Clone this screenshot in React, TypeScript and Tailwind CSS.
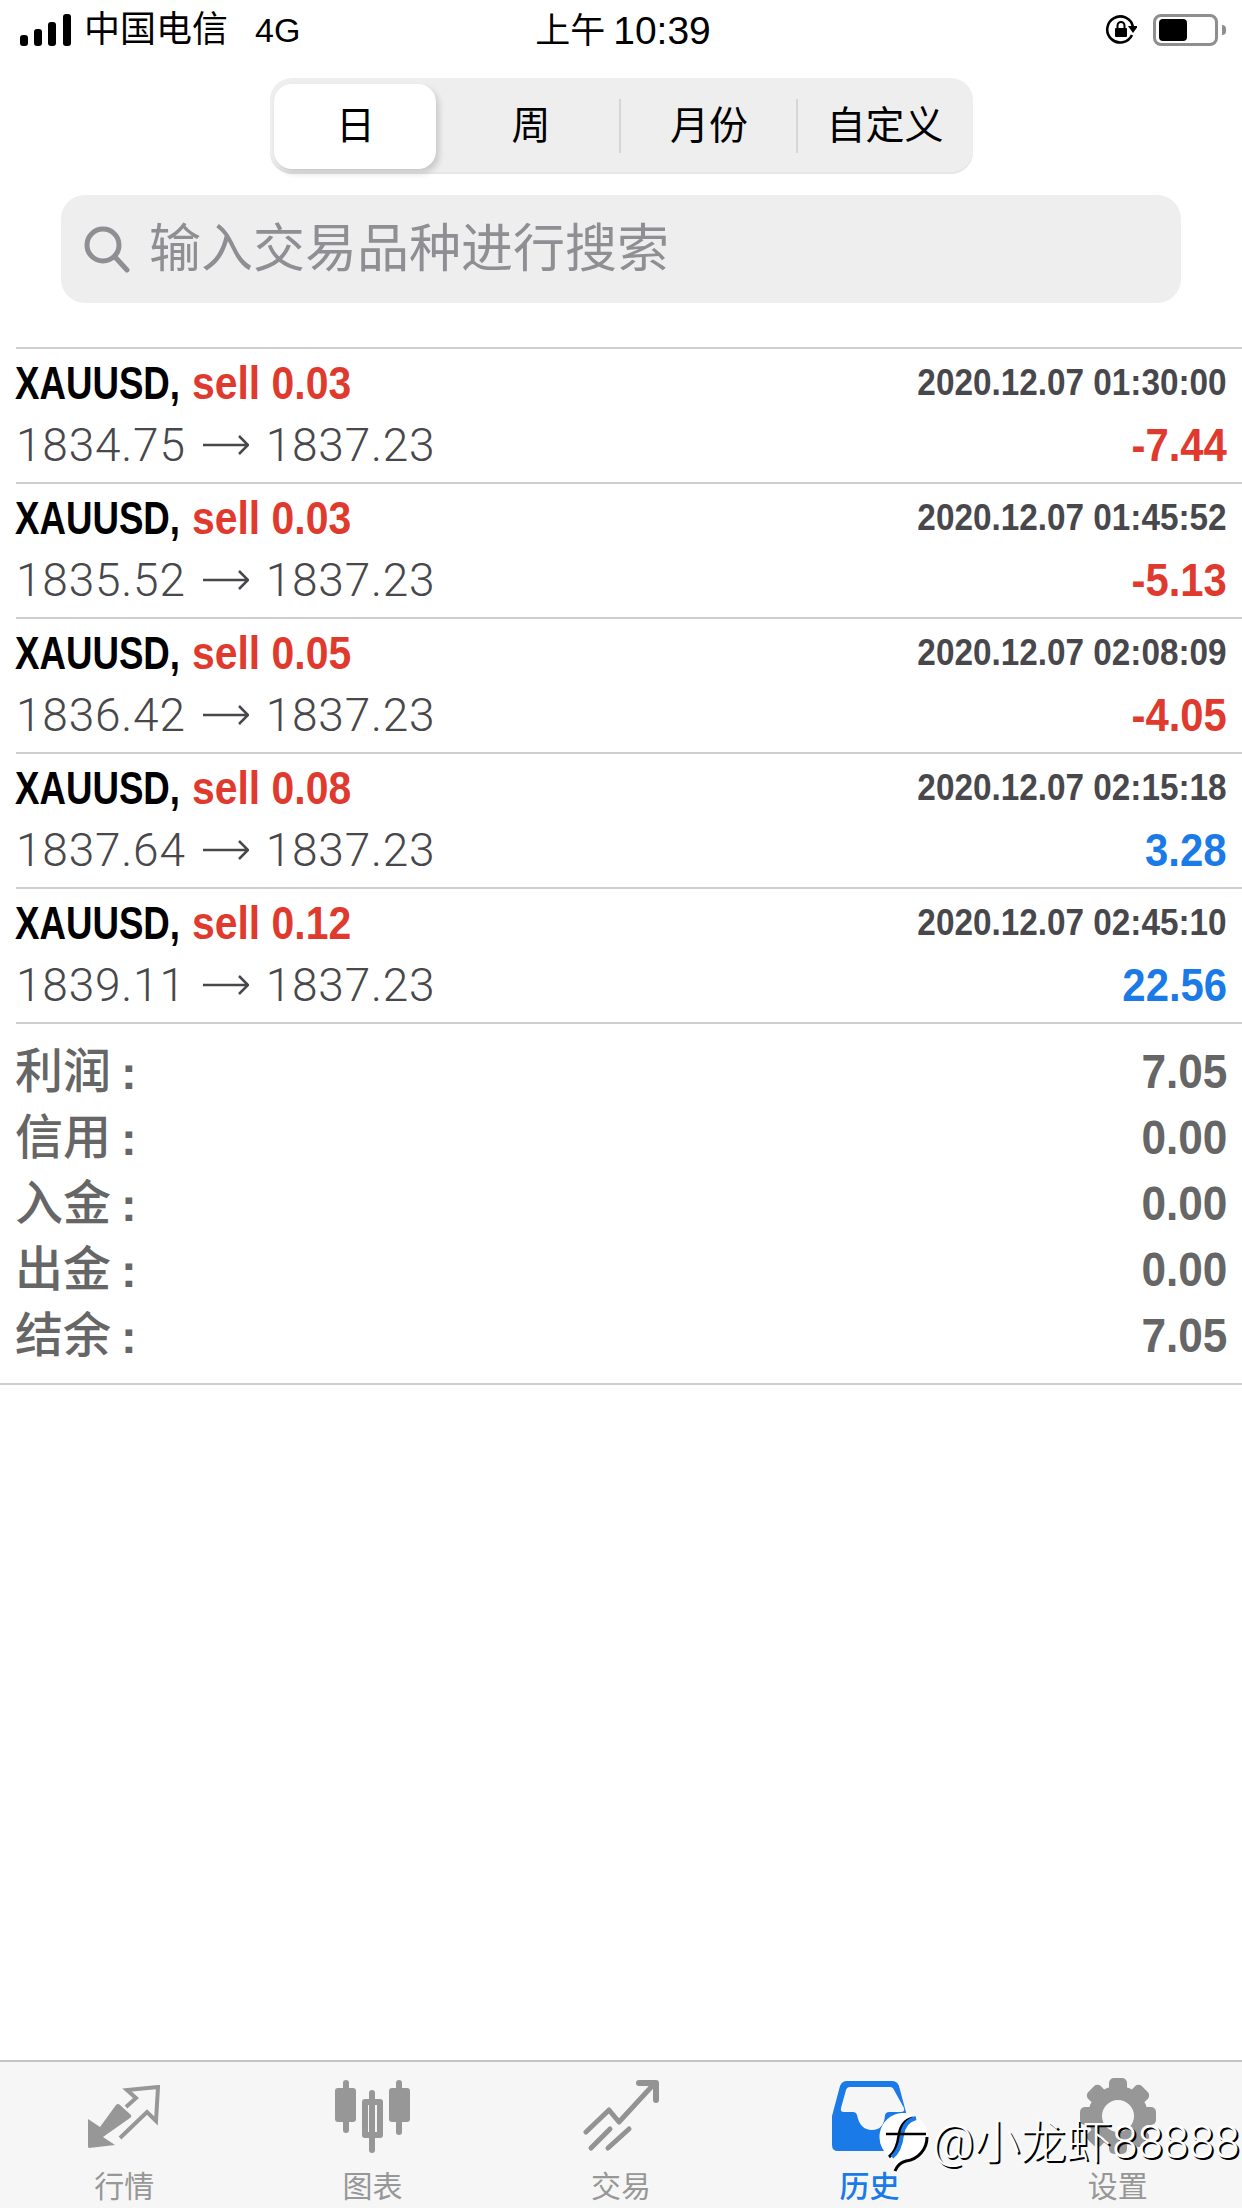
import React from 'react';

const rows = [
  { lots: '0.03', open: '1834.75', time: '2020.12.07 01:30:00', profit: '-7.44' },
  { lots: '0.03', open: '1835.52', time: '2020.12.07 01:45:52', profit: '-5.13' },
  { lots: '0.05', open: '1836.42', time: '2020.12.07 02:08:09', profit: '-4.05' },
  { lots: '0.08', open: '1837.64', time: '2020.12.07 02:15:18', profit: '3.28' },
  { lots: '0.12', open: '1839.11', time: '2020.12.07 02:45:10', profit: '22.56' },
];

const summary = [
  ['利润', '7.05'],
  ['信用', '0.00'],
  ['入金', '0.00'],
  ['出金', '0.00'],
  ['结余', '7.05'],
];

const StatusBar = () => (
  <div className="flex h-[60px] items-center justify-between pl-[20px] pr-[16px] text-black">
    <div className="flex w-[500px] items-center">
      <svg width="52" height="32" viewBox="0 0 52 32" fill="#000">
        <rect x="0" y="21" width="8" height="11" rx="3" />
        <rect x="14" y="15" width="8" height="17" rx="3" />
        <rect x="28" y="8" width="8" height="24" rx="3" />
        <rect x="43" y="0" width="8" height="32" rx="3" />
      </svg>
      <span className="ml-[12px] text-[36px] leading-none">中国电信</span>
      <span className="ml-[27px] text-[34px] leading-none">4G</span>
    </div>
    <div className="flex items-center gap-[8px] leading-none">
      <span className="text-[35px]">上午</span>
      <span className="text-[39px]">10:39</span>
    </div>
    <div className="flex w-[500px] items-center justify-end">
      <svg width="32" height="32" viewBox="0 0 32 32" fill="none">
        <path d="M27 21A13 13 0 1 1 28 13" stroke="#000" strokeWidth="2.6" />
        <path d="M23 12h10l-5 7z" fill="#000" />
        <rect x="10" y="14" width="12" height="9" rx="1" fill="#000" />
        <path d="M12.500 14v-2.500a3.500 3.500 0 0 1 7 0V14" stroke="#000" strokeWidth="2" />
      </svg>
      <div className="ml-[16px] flex h-[32px] w-[65px] items-center rounded-[8px] border-[3px] border-[#8e8e8e] px-[3px] py-[2px]">
        <div className="h-full w-[28px] rounded-[4px] bg-black" />
      </div>
      <div className="ml-[4px] h-[10px] w-[4px] rounded-r-full bg-[#8e8e8e]" />
    </div>
  </div>
);

const Segments = () => (
  <div className="mt-[18px] flex justify-center">
    <div className="relative flex h-[96px] w-[703px] items-center rounded-[22px] bg-[#eeeeef] pl-[4px] text-[39px] text-black shadow-[inset_0_-2px_0_#e6e6e6]">
      <div className="flex h-[85px] w-[162px] items-center justify-center rounded-[18px] bg-white pl-[2px] shadow-[3px_4px_6px_rgba(0,0,0,0.16)]">日</div>
      <div className="flex h-[54px] w-[185px] items-center justify-center border-r-2 border-[#d6d6d6] pl-[8px]">周</div>
      <div className="flex h-[54px] w-[177px] items-center justify-center border-r-2 border-[#d6d6d6] pl-[2px]">月份</div>
      <div className="flex h-[54px] flex-1 items-center justify-center">自定义</div>
    </div>
  </div>
);

const SearchBox = () => (
  <div className="mx-[61px] mt-[21px] flex h-[108px] items-center rounded-[24px] bg-[#eeeeef] pl-[22px]">
    <svg width="48" height="48" viewBox="0 0 48 48" fill="none" stroke="#8e8e93" strokeWidth="5" strokeLinecap="round">
      <circle cx="20" cy="20" r="16" />
      <path d="M32 32l12 13" />
    </svg>
    <span className="ml-[18px] text-[52px] leading-none text-[#8e8e93]">输入交易品种进行搜索</span>
  </div>
);

const TradeRow = ({ lots, open, time, profit }: (typeof rows)[number]) => {
  const isLoss = profit.startsWith('-');
  return (
    <div className="ml-[16px] h-[135px] border-t-2 border-[#cfcfcf] pr-[15px]">
      <div className="flex h-[66px] items-center justify-between">
        <div className="-ml-[1px] flex items-center">
          <span className="inline-block w-[177px] origin-left scale-x-[0.78] whitespace-nowrap text-[47px] font-bold leading-none text-black">XAUUSD,</span>
          <span className="inline-block origin-left scale-x-[0.87] whitespace-nowrap text-[47px] font-bold leading-none text-[#e03a2e]">sell {lots}</span>
        </div>
        <span className="origin-right scale-x-[0.9] whitespace-nowrap text-[37px] font-bold leading-none text-[#48484c]">{time}</span>
      </div>
      <div className="flex h-[60px] items-center justify-between">
        <div className="flex items-center gap-[17px] font-['Roboto',sans-serif] text-[46px] font-light leading-none tracking-[0.8px] text-[#48484c]">
          <span>{open}</span>
          <svg width="46" height="20" viewBox="0 0 46 20" fill="none" stroke="#48484c" strokeWidth="2.500">
            <path d="M0 10h45M36 1l9 9-9 9" />
          </svg>
          <span>1837.23</span>
        </div>
        <span className={`origin-right scale-x-[0.91] text-[46px] font-bold leading-none ${isLoss ? 'text-[#e03a2e]' : 'text-[#1a7ae8]'}`}>{profit}</span>
      </div>
    </div>
  );
};

const Summary = () => (
  <div className="border-b-2 border-[#cfcfcf] pb-[14px]">
    <div className="ml-[16px] border-t-2 border-[#cfcfcf] pr-[15px] pt-[15px] text-[#666666]">
      {summary.map(([label, value]) => (
        <div key={label} className="flex h-[66px] items-center justify-between">
          <div className="-ml-[1px] flex items-center">
            <span className="text-[48px] font-medium leading-none">{label}</span>
            <span className="ml-[10px] text-[47px] font-bold leading-none">:</span>
          </div>
          <span className="origin-right scale-x-[0.92] text-[48px] font-bold leading-none">{value}</span>
        </div>
      ))}
    </div>
  </div>
);

const MarketIcon = () => (
  <svg width="72" height="63" viewBox="0 0 72 63" fill="none">
    <path d="M0 34l12 8L28 20q2-2 4 0l11 10q1 2-1 3L15 52l12 8-26 3q-1 0-1-2z" fill="#979797" />
    <path d="M38 22l10-9-9-8 31-3-2 34-9-9-27 26" stroke="#979797" strokeWidth="4" />
  </svg>
);

const ChartIcon = () => (
  <svg width="76" height="73" viewBox="0 0 76 73" fill="#979797">
    <rect x="8" y="0" width="6" height="53" rx="3" />
    <rect x="0" y="8" width="21" height="34" rx="3" />
    <rect x="34" y="10" width="6" height="63" rx="3" />
    <path fillRule="evenodd" d="M30 19h15a3 3 0 0 1 3 3v33a3 3 0 0 1-3 3H30a3 3 0 0 1-3-3V22a3 3 0 0 1 3-3zm3 6v27h9V25z" />
    <rect x="61" y="0" width="6" height="55" rx="3" />
    <rect x="54" y="8" width="21" height="34" rx="3" />
  </svg>
);

const TradeIcon = () => (
  <svg width="76" height="73" viewBox="0 0 76 73" fill="none" stroke="#939393" strokeWidth="5" strokeLinecap="round" strokeLinejoin="round">
    <path d="M3 52l23-22 10 12L71 4" />
    <path d="M56 3h17v17" strokeWidth="6" />
    <path d="M8 68l19-19M25 68l21-19" />
  </svg>
);

const HistoryIcon = () => (
  <svg width="75" height="70" viewBox="0 0 75 70" fill="#1a7ae8">
    <path
      fillRule="evenodd"
      d="M15 0h45q5 0 7 5l8 30v29q0 6-6 6H6q-6 0-6-6V35L8 5q2-5 7-5zm3 6q-3 0-4 3L9 27q-1 4 3 4h9q3 0 4 3 3 15 15 15t13-15q1-3 4-3h12q4 0 3-4L62 9q-1-3-4-3z"
    />
  </svg>
);

const teeth = [0, 45, 90, 135, 180, 225, 270, 315];

const GearIcon = () => (
  <svg width="76" height="76" viewBox="-38 -38 76 76" fill="#979797">
    <circle r="30" />
    {teeth.map((angle) => (
      <rect key={angle} x="-9" y="-38" width="18" height="14" rx="5" transform={`rotate(${angle})`} />
    ))}
    <circle r="16" fill="#f6f6f6" />
  </svg>
);

const tabs = [
  { label: '行情', icon: <MarketIcon /> },
  { label: '图表', icon: <ChartIcon /> },
  { label: '交易', icon: <TradeIcon /> },
  { label: '历史', icon: <HistoryIcon />, active: true },
  { label: '设置', icon: <GearIcon /> },
];

const BubbleLogo = () => (
  <svg width="56" height="62" viewBox="0 0 56 62" className="shrink-0">
    <path d="M26 1a24 24 0 0 1 4 48q-8 2-11 10 0-6-1-12A24 24 0 0 1 26 1z" fill="#fff" />
    <path d="M51 25A24 24 0 0 1 30 49q-8 2-11 10" fill="none" stroke="#000" strokeWidth="3" />
    <path d="M15 45q8-6 10-22 2-14 14-17" fill="none" stroke="#000" strokeWidth="3" transform="translate(-2 0)" />
    <path d="M16 45q8-6 10-22 2-14 14-17" fill="none" stroke="#1a7ae8" strokeWidth="4" />
    <path d="M10 22h40" stroke="#000" strokeWidth="2.500" />
  </svg>
);

const TabBar = () => (
  <div className="relative grid h-[148px] grid-cols-5 border-t-2 border-[#c4c4c4] bg-[#f6f6f6]">
    {tabs.map((tab) => (
      <div key={tab.label} className="flex flex-col items-center">
        <div className="flex h-[94px] items-center pt-[14px]">{tab.icon}</div>
        <span className={`mt-[16px] text-[30px] leading-none ${tab.active ? 'font-medium text-[#1a7ae8]' : 'text-[#979797]'}`}>{tab.label}</span>
      </div>
    ))}

    {/* watermark over the tab bar */}
    <div className="absolute left-[876px] top-[50px] flex w-[366px] items-start text-white">
      <BubbleLogo />
      <span className="mt-[7px] whitespace-nowrap font-['Roboto','Noto_Sans_CJK_SC',sans-serif] text-[46px] font-light leading-none [text-shadow:2px_2px_0_#000]">@小龙虾88888</span>
    </div>
  </div>
);

export default function App() {
  return (
    <div className="flex h-[2208px] w-[1242px] flex-col overflow-hidden bg-white font-['Liberation_Sans','Noto_Sans_CJK_SC',sans-serif]">
      <StatusBar />
      <Segments />
      <SearchBox />
      <div className="mt-[44px]">
        {rows.map((row) => (
          <TradeRow key={row.time} {...row} />
        ))}
      </div>
      <Summary />
      <div className="flex-1" />
      <TabBar />
    </div>
  );
}
